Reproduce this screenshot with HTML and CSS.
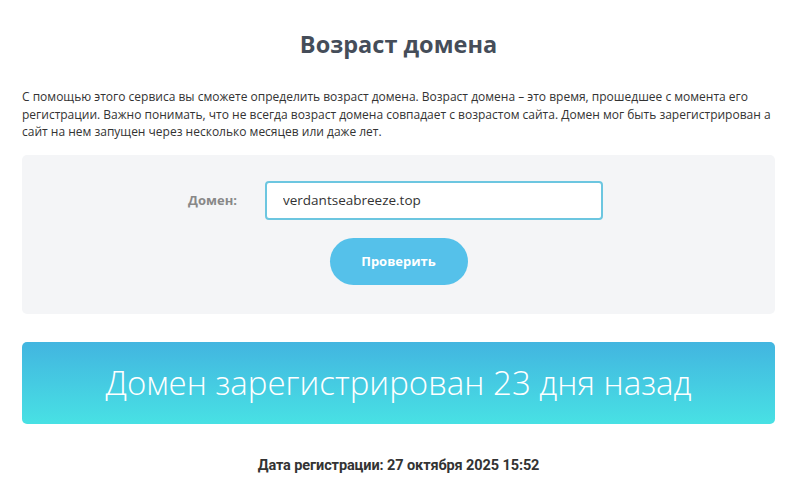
FILE: index.html
```html
<!DOCTYPE html>
<html lang="ru">
<head>
  <meta charset="UTF-8" />
  <title>Возраст домена</title>
  <link rel="stylesheet" href="styles.css">
</head>
<body>
  <div class="page">
    <h1>Возраст домена</h1>
    <p class="intro">С помощью этого сервиса вы сможете определить возраст домена. Возраст домена – это время, прошедшее с момента его регистрации. Важно понимать, что не всегда возраст домена совпадает с возрастом сайта. Домен мог быть зарегистрирован а сайт на нем запущен через несколько месяцев или даже лет.</p>

    <form class="check-form" onsubmit="return false">
      <div class="form-row">
        <label for="domain">Домен:</label>
        <input type="text" id="domain" value="verdantseabreeze.top" />
      </div>
      <button type="submit">Проверить</button>
    </form>

    <div class="result">Домен зарегистрирован 23 дня назад</div>

    <p class="reg-date">Дата регистрации: 27 октября 2025 15:52</p>
  </div>
</body>
</html>
```

FILE: styles.css
```css
* { box-sizing: border-box; }
body {
  margin: 0;
  font-family: 'Open Sans', sans-serif;
  color: #333;
  background: #fff;
}
.page {
  padding: 0 25px 0 22px;
}
h1 {
  margin: 0;
  padding-top: 29px;
  text-align: center;
  font-size: 23.5px;
  font-weight: 700;
  color: #454d59;
  line-height: 30px;
}
.intro {
  margin: 29px 0 0;
  font-size: 12px;
  line-height: 17.5px;
}
.check-form {
  margin-top: 14px;
  background: #f4f5f7;
  border-radius: 5px;
  height: 159px;
  padding-top: 26px;
  display: flex;
  flex-direction: column;
  align-items: center;
}
.form-row {
  display: flex;
  align-items: center;
  margin-left: -6px;
}
label {
  width: 77px;
  font-size: 13px;
  font-weight: 700;
  color: #888;
}
input[type="text"] {
  width: 338px;
  height: 39px;
  padding: 0 16px;
  border: 2px solid #6cc6e0;
  border-radius: 4px;
  font-family: inherit;
  font-size: 13.5px;
  color: #333;
  background: #fff;
}
button {
  margin-top: 18px;
  width: 138px;
  height: 47px;
  border: none;
  border-radius: 24px;
  background: #55c1ea;
  color: #fff;
  font-family: inherit;
  font-size: 13px;
  font-weight: 700;
  cursor: pointer;
}
.result {
  margin-top: 28px;
  height: 82px;
  border-radius: 5px;
  background: linear-gradient(to bottom, #42b5e0, #48e1e4);
  color: #fff;
  font-size: 33px;
  font-weight: 300;
  display: flex;
  align-items: center;
  justify-content: center;
}
.reg-date {
  margin: 33px 0 0;
  text-align: center;
  font-family: 'Roboto', sans-serif;
  font-size: 14.5px;
  font-weight: 700;
  letter-spacing: -0.1px;
}
```
